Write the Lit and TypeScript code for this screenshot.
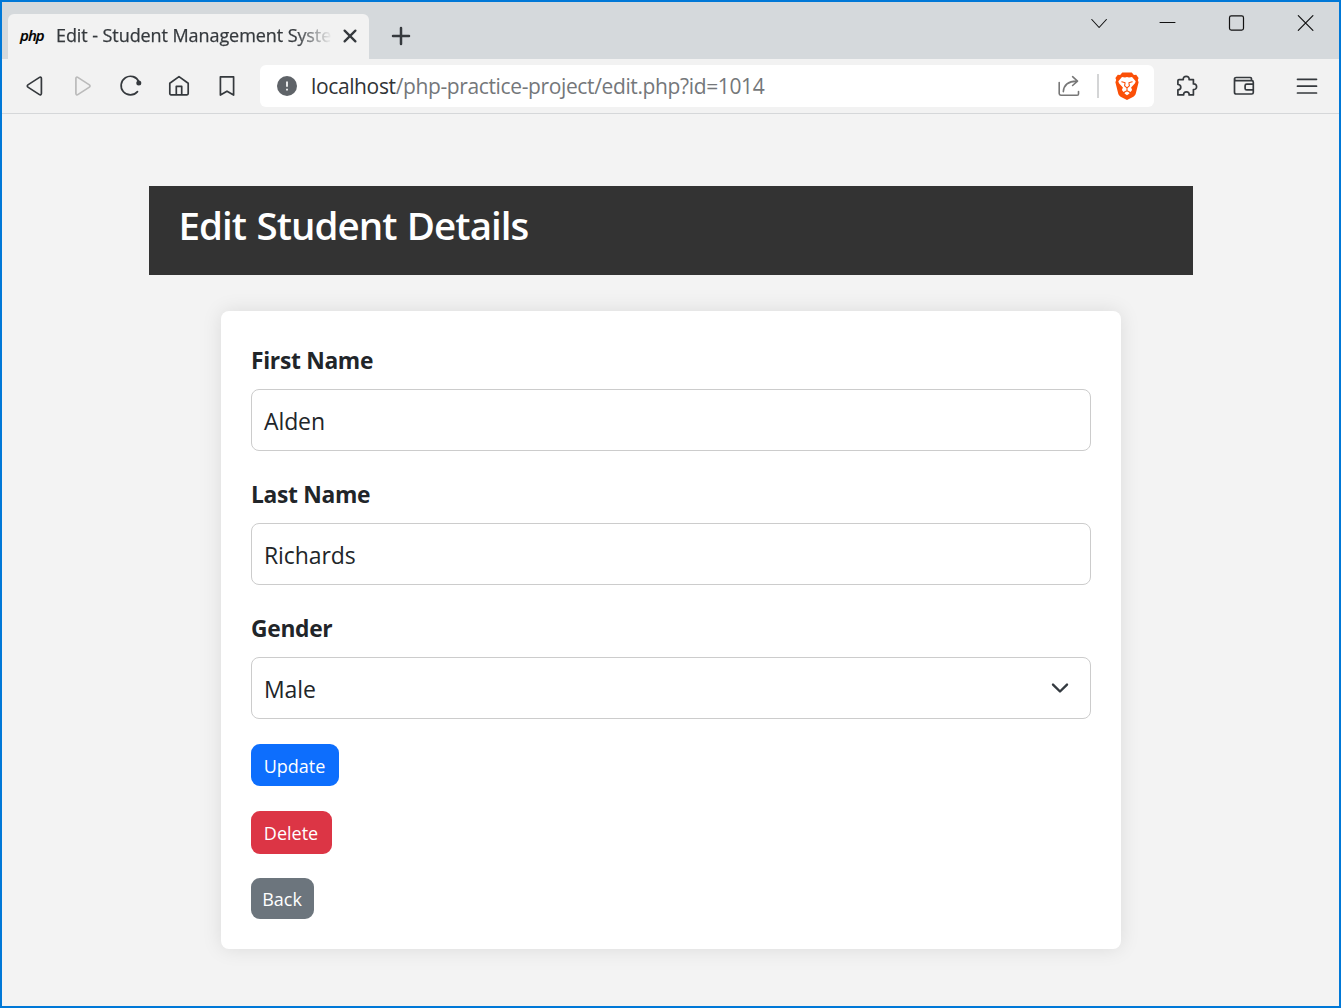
import { LitElement, html, css, svg } from "lit";
import { customElement, property } from "lit/decorators.js";

const icons: Record<string, unknown> = {
  back: svg`<path d="M18.4 4.4v15.2c0 1-1 1.600-1.900 1L4.900 13.100c-.8-.5-.8-1.700 0-2.200L16.500 3.400c.9-.6 1.900 0 1.900 1z"/>`,
  forward: svg`<path d="M4.900 4.400v15.200c0 1 1 1.600 1.900 1l11.600-7.500c.8-.5.8-1.700 0-2.200L6.800 3.400c-.9-.6-1.900 0-1.900 1z"/>`,
  reload: svg`<path d="M20.400 8.200A9.300 9.300 0 1 0 19 18" transform="translate(-.5 -.4)"/><circle cx="19.800" cy="8.900" r="2.500" fill="currentColor" stroke="none"/>`,
  home: svg`<path d="M2.800 9.200L12 2.600l9.200 6.600v10.400c0 .7-.5 1.200-1.200 1.200H4c-.7 0-1.200-.5-1.200-1.200zM9.300 20.500v-8.200h5.400v8.200"/>`,
  bookmark: svg`<path d="M5.400 2.800h13.200v18.300L12 17.200l-6.600 3.900z"/>`,
  share: svg`<path d="M2.200 8.500v11.100c0 1 .6 1.600 1.600 1.600h16.400c.8 0 1.300-.5 1.300-1.300v-2.400M6.300 17.600C6.800 11 11.300 7.300 19.600 7.100M15.600 2.700l4.900 4.400-4.900 4.400" stroke-width="1.600"/>`,
  puzzle: svg`<path d="M4 5.600h4.300C7.900 3.300 9.500 2.300 11.200 2.300s3.300 1 2.900 3.300h4.300v4.300c2.200-.2 3.200 1.300 3.200 2.800s-1 3-3.200 2.800v5.400h-4.300c.3-2.100-1-3.100-2.700-3.100s-3 1-2.700 3.100H2.900v-5c2-.1 2.900-1.300 2.900-2.700s-.9-2.600-2.900-2.700V6.700c0-.7.400-1.100 1.100-1.100z"/>`,
  wallet: svg`<path d="M19.500 6.500V4.800c0-.8-.5-1.300-1.300-1.300H4.200c-1 0-1.700.6-1.700 1.500v13.200c0 1.100.7 1.800 1.800 1.800h15.400c1 0 1.600-.6 1.600-1.600V8.200c0-1-.6-1.600-1.600-1.600H4.200c-1 0-1.700-.6-1.700-1.500M21.300 10.200h-6.600c-1 0-1.600.6-1.600 1.500v2.700c0 1 .6 1.500 1.600 1.500h6.600"/>`,
  menu: svg`<path d="M2.500 5.300h19M2.500 12.200h19M2.500 19h19"/>`,
  caret: svg`<path d="M5.800 8.500l7.300 8L20.400 8.500" stroke-width="1.100"/>`,
  minimize: svg`<path d="M5 11.500h15" stroke-width="1"/>`,
  maximize: svg`<rect x="5.500" y="4.900" width="14" height="14.200" rx="1.800" stroke-width="1.200"/>`,
  close: svg`<path d="M5.300 4.700l14.600 14.600M19.900 4.700L5.300 19.300" stroke-width="1.200"/>`,
  tabClose: svg`<path d="M6.600 6.600l10.800 10.800M17.400 6.600L6.600 17.400" stroke-width="2.300"/>`,
  plus: svg`<path d="M12 4v16M4 12h16" stroke-width="2.500"/>`,
  info: svg`<circle cx="12" cy="12" r="10" fill="currentColor" stroke="none"/><path d="M12 7.400v5.400M12 14.700v1.700" stroke="#fff" stroke-width="1.700" stroke-linecap="butt"/>`,
  chevron: svg`<path d="M5 8.600L12 15.500l7-6.900" stroke-width="2.400"/>`,
};

@customElement("ui-icon")
class UiIcon extends LitElement {
  @property() name = "";
  static styles = css`
    :host { display: block; width: 24px; height: 24px; flex: none; }
    .glyph {
      display: block; width: 24px; height: 24px; fill: none; stroke: currentColor;
      stroke-width: 1.700; stroke-linecap: round; stroke-linejoin: round;
    }
  `;
  render() {
    return html`<svg class="glyph" viewBox="0 0 24 24">${icons[this.name]}</svg>`;
  }
}

@customElement("brave-shield")
class BraveShield extends LitElement {
  static styles = css`
    :host { display: block; flex: none; }
    .shield { display: block; width: 24px; height: 28px; }
  `;
  render() {
    return html`<svg class="shield" viewBox="0 0 24 28">
      <path fill="#fb4f07" d="M7.300.6h9.400l2.200 2.300 2.300-.2 2.400 3.300-.8 2 .8 2.300-2.800 11.200c-.4 1.500-1.200 2.400-2.400 3.200L12 28l-6.400-3.300c-1.200-.8-2-1.700-2.400-3.200L.4 10.300 1.200 8 .4 6l2.400-3.300 2.300.2z"/>
      <path fill="#fff" d="M7 4.900l3 .6 2-.4 2 .4 3-.6 3.700 4.400-.7 2-3.900 4.200 1 2.500-1.600 1.900-2.300-1.100 1.300 2.700L12 23.300l-2.500-1.800 1.300-2.700-2.300 1.100-1.600-1.900 1-2.500L4 11.300l-.7-2z"/>
      <path fill="none" stroke="#fb4f07" stroke-width="1.100" stroke-linecap="round" stroke-linejoin="round" d="M6.800 9.800l3.300.9-.5 3.200 2.400 2 2.400-2-.5-3.200 3.300-.9M12 16.200v2.200M10.300 19.700l1.700-1 1.700 1"/>
    </svg>`;
  }
}

@customElement("browser-chrome")
class BrowserChrome extends LitElement {
  static styles = css`
    :host { display: block; font-family: "Open Sans", "Noto Sans", sans-serif; color: #35393d; }
    .titlebar { display: flex; height: 57px; background: #d5d9dc; box-sizing: border-box; padding: 12px 0 0 6px; }
    .tab {
      display: flex; align-items: center; width: 361px; height: 45px; box-sizing: border-box;
      padding: 0 6px 2px 12px; background: #f2f2f2; border-radius: 6px 6px 0 0;
    }
    .favicon { flex: none; width: 36px; font: italic 600 15px "Open Sans", sans-serif; color: #000; line-height: 20px; letter-spacing: -0.900px; padding-bottom: 2px; -webkit-text-stroke: 0.200px; }
    .title {
      flex: none; width: 276px; overflow: hidden; white-space: nowrap; font-size: 18px; font-weight: 500; line-height: 26px;
      letter-spacing: -0.080px; margin-right: 6px; padding-bottom: 1px; -webkit-text-stroke: 0.250px;
      -webkit-mask-image: linear-gradient(90deg, #000 240px, transparent 276px);
      mask-image: linear-gradient(90deg, #000 240px, transparent 276px);
    }
    .new-tab { margin: 10px auto 0 20px; }
    .window-buttons { display: flex; gap: 45px; margin: -3px 22px 0 0; color: #111; }
    .toolbar {
      display: flex; align-items: center; height: 55px; box-sizing: border-box;
      background: #f2f2f2; border-bottom: 1px solid #d5d7d9; padding-left: 21px;
    }
    .nav { display: flex; gap: 24px; width: 237px; }
    .disabled { color: #bbb; }
    .address {
      display: flex; align-items: center; width: 894px; height: 42px; box-sizing: border-box;
      background: #fff; border-radius: 6px; padding: 0 15px;
    }
    .info { color: #5f6368; margin-right: 12px; }
    .url { flex: 1; font-size: 21px; line-height: 30px; color: #74777a; white-space: nowrap; letter-spacing: -0.370px; }
    .host { color: #303336; }
    .share { color: #777; }
    .divider { width: 2px; height: 24px; background: #d4d5d6; margin: 0 16px; }
    .tools { display: flex; gap: 33px; margin-left: 21px; }
    .menu { margin-left: 6px; }
  `;
  render() {
    return html`
      <div class="titlebar">
        <div class="tab">
          <span class="favicon">php</span>
          <span class="title">Edit - Student Management System</span>
          <ui-icon name="tabClose"></ui-icon>
        </div>
        <ui-icon class="new-tab" name="plus"></ui-icon>
        <div class="window-buttons">
          ${["caret", "minimize", "maximize", "close"].map((n) => html`<ui-icon name=${n}></ui-icon>`)}
        </div>
      </div>
      <div class="toolbar">
        <div class="nav">
          <ui-icon name="back"></ui-icon>
          <ui-icon class="disabled" name="forward"></ui-icon>
          <ui-icon name="reload"></ui-icon>
          <ui-icon name="home"></ui-icon>
          <ui-icon name="bookmark"></ui-icon>
        </div>
        <div class="address">
          <ui-icon class="info" name="info"></ui-icon>
          <div class="url"><span class="host">localhost</span>/php-practice-project/edit.php?id=1014</div>
          <ui-icon class="share" name="share"></ui-icon>
          <div class="divider"></div>
          <brave-shield></brave-shield>
        </div>
        <div class="tools">
          <ui-icon name="puzzle"></ui-icon>
          <ui-icon name="wallet"></ui-icon>
          <ui-icon class="menu" name="menu"></ui-icon>
        </div>
      </div>
    `;
  }
}

@customElement("student-form")
class StudentForm extends LitElement {
  static styles = css`
    :host { display: block; font-family: "Open Sans", "Noto Sans", sans-serif; color: #212529; }
    .header { box-sizing: border-box; width: 1044px; height: 89px; margin: 0 auto 36px; padding: 15px 30px; background: #333; }
    .heading { margin: 0; font-size: 38.500px; line-height: 48px; font-weight: 600; color: #fff; letter-spacing: -0.950px; word-spacing: 1.300px; white-space: nowrap; }
    .card {
      box-sizing: border-box; width: 900px; height: 638px; margin: 0 auto; padding: 30px;
      background: #fff; border-radius: 8px; box-shadow: 0 0 20px rgba(0, 0, 0, 0.1);
    }
    .label { display: block; font-size: 22.800px; font-weight: 700; line-height: 40px; margin-bottom: 8px; letter-spacing: -0.300px; padding-left: 0.500px; }
    .control {
      display: flex; align-items: center; justify-content: space-between; box-sizing: border-box; height: 62px;
      padding: 2px 18px 0 12.500px; border: 1px solid #ccc; border-radius: 8px; margin-bottom: 24px;
      font-size: 23px; line-height: 36px; letter-spacing: -0.100px;
    }
    .arrow { margin-top: -2px; color: #343a40; }
    .actions { display: flex; flex-direction: column; align-items: flex-start; gap: 25px; margin-top: 25px; }
    .button {
      box-sizing: border-box; height: 42px; border: 0; border-radius: 9px; padding: 2px 0 0; color: #fff;
      font: 400 18px/28px "Open Sans", "Noto Sans", sans-serif;
    }
    .update { width: 88px; background: #0d6efd; }
    .delete { width: 81px; height: 43px; background: #dc3545; margin-bottom: -1px; padding-top: 0; }
    .back { width: 63px; height: 41px; background: #6c757d; padding-top: 0; }
  `;
  render() {
    return html`
      <header class="header"><h1 class="heading">Edit Student Details</h1></header>
      <main class="card">
        <label class="label">First Name</label>
        <div class="control">Alden</div>
        <label class="label">Last Name</label>
        <div class="control">Richards</div>
        <label class="label">Gender</label>
        <div class="control">Male<ui-icon class="arrow" name="chevron"></ui-icon></div>
        <div class="actions">
          <button class="button update">Update</button>
          <button class="button delete">Delete</button>
          <button class="button back">Back</button>
        </div>
      </main>
    `;
  }
}

@customElement("app-root")
class AppRoot extends LitElement {
  static styles = css`
    :host { display: block; box-sizing: border-box; width: 1341px; height: 1008px; border: 2px solid #0078d7; background: #f3f3f3; overflow: hidden; }
    .page { display: block; padding-top: 72px; }
  `;
  render() {
    return html`<browser-chrome></browser-chrome><student-form class="page"></student-form>`;
  }
}
